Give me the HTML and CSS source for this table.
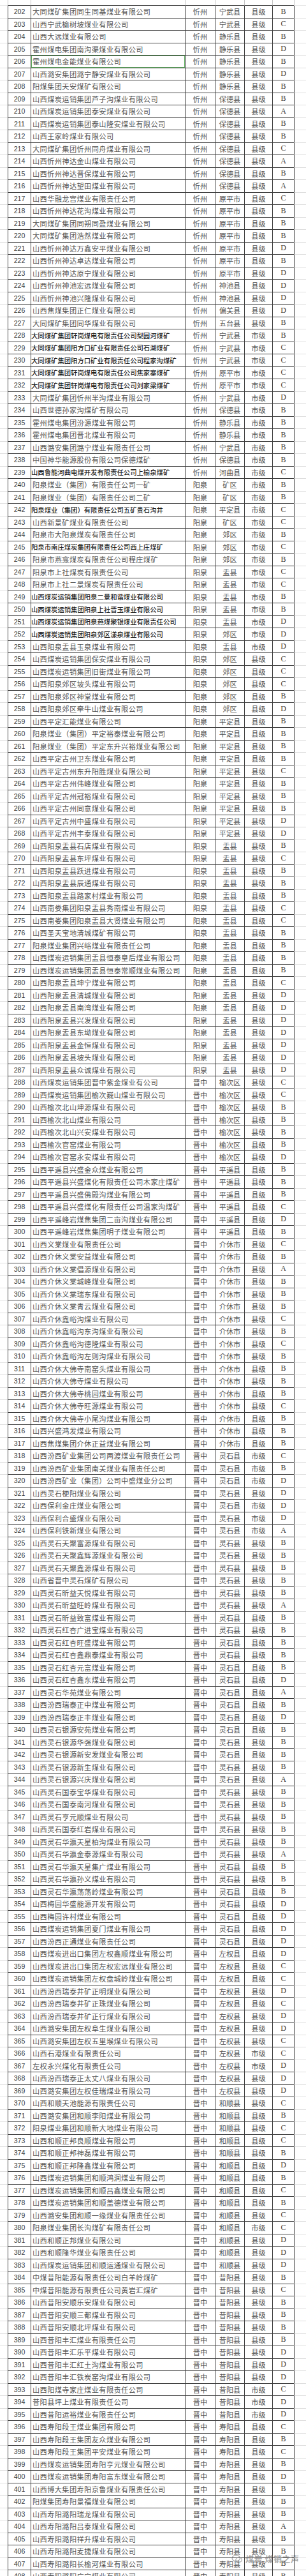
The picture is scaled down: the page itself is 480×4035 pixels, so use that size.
FILE: index.html
```html
<!DOCTYPE html>
<html lang="zh-CN">
<head>
<meta charset="utf-8">
<title>煤矿安全生产标准化等级</title>
<link rel="stylesheet" href="styles.css">
</head>
<body>
<div class="sheet">
  <div class="row top">
    <span class="m"></span><span class="c"></span><span class="c"></span><span class="c"></span><span class="c"></span><span class="c"></span><span class="c"></span><span class="e"></span>
  </div>
  <div id="rows"></div>
  <div class="mark">
    <svg class="mark-ico" viewBox="0 0 20 16" width="18" height="14"><ellipse cx="8" cy="7" rx="7" ry="5.5" fill="none" stroke="currentColor" stroke-width="1.4"/><ellipse cx="13" cy="10" rx="5.5" ry="4.2" fill="none" stroke="currentColor" stroke-width="1.4"/></svg>
    <span class="mark-txt">煤炭 煤销之声</span>
  </div>
</div>
<script src="app.js"></script>
</body>
</html>
```

FILE: styles.css
```css
html, body {
  margin: 0;
  padding: 0;
  background: #fff;
}
.sheet {
  position: relative;
  width: 480px;
  height: 4035px;
  overflow: hidden;
  background: #fff;
}
.row {
  display: grid;
  grid-template-columns: 12px 36px 242px 47px 46px 44px 34px 1fr;
  height: 19.514px;
}
.row > span {
  box-sizing: border-box;
  display: flex;
  align-items: center;
  justify-content: center;
  overflow: hidden;
  white-space: nowrap;
  border-bottom: 1px solid #3d3d3d;
  border-left: 1px solid #3d3d3d;
  font-family: "Noto Sans CJK SC", "Noto Sans", sans-serif;
  font-size: 11.2px;
  color: #555;
}
.row > .m {
  border-left: none;
  border-bottom: 1px solid #dedede;
}
.row > .e {
  border-bottom: 1px solid #dedede;
}
.row.top {
  height: 9px;
}
.row.top > .c {
  border-left-color: #c4c4c4;
}
.row.top > .m {
  border-bottom-color: #e6e6e6;
}
.row.top > .e {
  border-left-color: #c4c4c4;
  border-bottom-color: #e6e6e6;
}
.row > .num {
  font-family: "Liberation Sans", Arial, sans-serif;
  font-size: 10.6px;
  color: #3a3a3a;
}
.row > .name {
  justify-content: flex-start;
  padding-left: 2px;
  letter-spacing: 0.4px;
}
.row > .grade {
  font-family: "Liberation Serif", "Times New Roman", serif;
  font-size: 12px;
  color: #3a3a3a;
}
.row.sans > .name {
  padding-left: 0;
  letter-spacing: 0;
  font-size: 10.35px;
  font-weight: 500;
  color: #1f1f1f;
}
.row > .sel {
  box-shadow: inset 0 0 0 1px #62b062;
}
.mark {
  position: absolute;
  left: 363px;
  top: 3998px;
  display: flex;
  align-items: center;
  gap: 4px;
  color: rgba(110, 110, 110, 0.6);
}
.mark-txt {
  font-family: "Noto Sans CJK SC", sans-serif;
  font-size: 13px;
  font-weight: 700;
  letter-spacing: 0.5px;
}
```

FILE: app.js
```js
var DATA = `大同煤矿集团同生同基煤业有限公司|忻州|宁武县|x|B
山西宁武榆树坡煤业有限公司|忻州|宁武县|x|C
山西大远煤业有限公司|忻州|静乐县|x|B
霍州煤电集团南沟渠煤业有限公司|忻州|静乐县|x|D
霍州煤电金能煤业有限公司|忻州|静乐县|x|B|g
山西潞安集团潞宁静安煤业有限公司|忻州|静乐县|x|D
阳煤集团天安煤矿有限公司|忻州|静乐县|x|B
山西煤炭运销集团芦子沟煤业有限公司|忻州|保德县|x|B
山西煤炭运销集团泰安煤业有限公司|忻州|保德县|x|A
山西煤炭运销集团泰山隆安煤业有限公司|忻州|保德县|x|B
山西王家岭煤业有限公司|忻州|保德县|x|B
大同煤矿集团忻州同舟煤业有限公司|忻州|保德县|x|C
山西忻州神达金山煤业有限公司|忻州|保德县|x|A
山西忻州神达晋保煤业有限公司|忻州|保德县|x|B
山西忻州神达望田煤业有限公司|忻州|保德县|x|A
山西华融龙宫煤业有限责任公司|忻州|原平市|x|C
山西忻州神达花沟煤业有限公司|忻州|原平市|x|B
大同煤矿集团同朔同盈煤业有限公司|忻州|原平市|x|B
大同煤矿集团浩然煤业有限公司|忻州|原平市|x|B
山西忻州神达万鑫安平煤业有限公司|忻州|原平市|x|D
山西忻州神达卓达煤业有限公司|忻州|原平市|x|B
山西忻州神达原宁煤业有限公司|忻州|原平市|x|D
山西忻州神池宏远煤业有限公司|忻州|神池县|x|D
山西忻州神池兴隆煤业有限公司|忻州|神池县|x|D
山西焦煤集团正仁煤业有限公司|忻州|偏关县|x|D
大同煤矿集团同华煤业有限公司|忻州|五台县|x|B
大同煤矿集团轩岗煤电有限责任公司梨园河煤矿|忻州|宁武县|s|B|f
大同煤矿集团阳方口矿业有限责任公司石湖煤矿|忻州|宁武县|s|C|f
大同煤矿集团阳方口矿业有限责任公司程家沟煤矿|忻州|宁武县|s|C|f
大同煤矿集团轩岗煤电有限责任公司焦家寨煤矿|忻州|原平市|s|C|f
大同煤矿集团轩岗煤电有限责任公司刘家梁煤矿|忻州|原平市|s|C|f
大同煤矿集团忻州半沟煤业有限公司|忻州|宁武县|s|D
山西世德孙家沟煤矿有限公司|忻州|保德县|s|B
霍州煤电集团汾源煤业有限公司|忻州|静乐县|s|B
霍州煤电集团晋北煤业有限公司|忻州|静乐县|s|B
山西潞安集团潞宁煤业有限责任公司|忻州|宁武县|s|B
中国神华能源股份有限公司保德煤矿|忻州|保德县|s|B
山西鲁能河曲电煤开发有限责任公司上榆泉煤矿|忻州|河曲县|s|C|f
阳泉煤业（集团）有限责任公司一矿|阳泉|矿区|s|B
阳泉煤业（集团）有限责任公司二矿|阳泉|矿区|s|B
阳泉煤业（集团）有限责任公司五矿贵石沟井|阳泉|平定县|s|C|f
山西新景矿煤业有限责任公司|阳泉|矿区|s|C
阳泉市大阳泉煤炭有限责任公司|阳泉|郊区|s|B
阳泉市南庄煤炭集团有限责任公司西上庄煤矿|阳泉|郊区|s|C|f
阳泉市燕龛煤炭有限责任公司程庄煤矿|阳泉|郊区|s|B
阳泉市上社煤炭有限责任公司|阳泉|盂县|s|C
阳泉市上社二景煤炭有限责任公司|阳泉|盂县|s|C
山西煤炭运销集团阳泉二景和谐煤业有限公司|阳泉|盂县|s|B|f
山西煤炭运销集团阳泉上社晋玉煤业有限公司|阳泉|盂县|s|B|f
山西煤炭运销集团阳泉燕煤聚银煤业有限责任公司|阳泉|盂县|s|D|f
山西煤炭运销集团阳泉郊区漾泉煤业有限公司|阳泉|郊区|s|D|f
山西阳泉盂县玉泉煤业有限公司|阳泉|盂县|s|D
山西煤炭运销集团保安煤业有限公司|阳泉|郊区|x|C
山西煤炭运销集团旧街煤业有限公司|阳泉|郊区|x|C
山西阳泉郊区坡头煤业有限公司|阳泉|郊区|x|C
山西阳泉郊区神堂煤业有限公司|阳泉|郊区|x|B
山西阳泉郊区牵牛山煤业有限公司|阳泉|郊区|x|D
山西平定汇能煤业有限公司|阳泉|平定县|x|B
阳泉煤业（集团）平定裕泰煤业有限公司|阳泉|平定县|x|B
阳泉煤业（集团）平定东升兴裕煤业有限公司|阳泉|平定县|x|B
山西平定古州卫东煤业有限公司|阳泉|平定县|x|B
山西平定古州东升阳胜煤业有限公司|阳泉|平定县|x|C
山西平定古州伟峰煤业有限公司|阳泉|平定县|x|B
山西平定古州冠裕煤业有限公司|阳泉|平定县|x|B
山西平定古州同意煤业有限公司|阳泉|平定县|x|B
山西平定古州中盛煤业有限公司|阳泉|平定县|x|D
山西平定古州丰泰煤业有限公司|阳泉|平定县|x|D
山西阳泉盂县石店煤业有限公司|阳泉|盂县|x|B
山西阳泉盂县东坪煤业有限公司|阳泉|盂县|x|C
山西阳泉盂县跃进煤业有限公司|阳泉|盂县|x|B
山西阳泉盂县辰通煤业有限公司|阳泉|盂县|x|B
山西阳泉盂县路家村煤业有限公司|阳泉|盂县|x|B
山西南娄集团阳泉盂县秀南煤业有限公司|阳泉|盂县|x|C
山西南娄集团阳泉盂县大贤煤业有限公司|阳泉|盂县|x|C
山西圣天宝地清城煤矿有限公司|阳泉|盂县|x|B
阳泉煤业集团兴峪煤业有限责任公司|阳泉|盂县|x|B
山西煤炭运销集团盂县恒泰皇后煤业有限公司|阳泉|盂县|x|B
山西煤炭运销集团盂县恒泰常顺煤业有限公司|阳泉|盂县|x|B
山西阳泉盂县坤宁煤业有限公司|阳泉|盂县|x|C
山西阳泉盂县清城煤业有限公司|阳泉|盂县|x|D
山西阳泉盂县南湾煤业有限公司|阳泉|盂县|x|D
山西阳泉盂县兴发煤业有限公司|阳泉|盂县|x|D
山西阳泉盂县东坳煤业有限公司|阳泉|盂县|x|D
山西阳泉盂县金恒煤业有限公司|阳泉|盂县|x|D
山西阳泉盂县坡头煤业有限公司|阳泉|盂县|x|D
山西阳泉盂县众诚煤业有限公司|阳泉|盂县|x|D
山西煤炭运销集团晋中紫金煤业有公司|晋中|榆次区|x|C
山西煤炭运销集团榆次巍山煤业有限公司|晋中|榆次区|x|C
山西榆次北山坤源煤业有限公司|晋中|榆次区|x|B
山西榆次北山煤业有限公司|晋中|榆次区|x|B
山西榆次北山兴安煤业有限公司|晋中|榆次区|x|B
山西榆次官窑煤业有限公司|晋中|榆次区|x|B
山西榆次官窑永安煤业有限公司|晋中|榆次区|x|D
山西平遥县兴盛金众煤业有限公司|晋中|平遥县|x|B
山西平遥县兴盛煤化有限责任公司木家庄煤矿|晋中|平遥县|x|B
山西平遥县兴盛佛殿沟煤业有限公司|晋中|平遥县|x|B
山西平遥县兴盛煤化有限责任公司温家沟煤矿|晋中|平遥县|x|C
山西平遥峰岩煤焦集团二亩沟煤业有限公司|晋中|平遥县|x|D
山西平遥峰岩煤焦集团明子煤业有限公司|晋中|平遥县|x|B
山西义棠煤业有限责任公司|晋中|介休市|x|C
山西介休义棠安益煤业有限公司|晋中|介休市|x|B
山西介休义棠倡源煤业有限公司|晋中|介休市|x|A
山西介休义棠城峰煤业有限公司|晋中|介休市|x|B
山西介休义棠瑞东煤业有限公司|晋中|介休市|x|B
山西介休义棠青云煤业有限公司|晋中|介休市|x|B
山西介休鑫峪沟煤业有限公司|晋中|介休市|x|C
山西介休鑫峪沟东沟煤业有限公司|晋中|介休市|x|B
山西介休鑫峪沟德隆煤业有限公司|晋中|介休市|x|C
山西介休鑫峪沟左则沟煤业有限公司|晋中|介休市|x|B
山西介休大佛寺南窑头煤业有限公司|晋中|介休市|x|B
山西介休大佛寺煤业有限公司|晋中|介休市|x|B
山西介休大佛寺桃园煤业有限公司|晋中|介休市|x|B
山西介休大佛寺旺源煤业有限公司|晋中|介休市|x|C
山西介休大佛寺小尾沟煤业有限公司|晋中|介休市|x|B
山西兴盛鸿发煤业有限公司|晋中|介休市|x|B
山西焦煤集团介休正益煤业有限公司|晋中|介休市|x|B
山西汾西矿业集团公司两渡煤业有限责任公司|晋中|灵石县|s|C
山西汾西矿业集团南关煤业有限责任公司|晋中|灵石县|s|B
山西汾西矿业（集团）公司中盛煤业分公司|晋中|灵石县|s|D
山西灵石梗阳煤业有限公司|晋中|灵石县|x|D
山西保利金庄煤业有限公司|晋中|灵石县|s|D
山西保利合盛煤业有限公司|晋中|灵石县|s|D
山西保利铁新煤业有限公司|晋中|灵石县|s|A
山西灵石天聚富源煤业有限公司|晋中|灵石县|x|B
山西灵石天聚鑫辉源煤业有限公司|晋中|灵石县|x|B
山西灵石天聚鑫源煤业有限公司|晋中|灵石县|x|B
山西省晋中灵石煤矿有限公司|晋中|灵石县|x|B
山西灵石昕益天悦煤业有限公司|晋中|灵石县|x|B
山西灵石昕益旺岭煤业有限公司|晋中|灵石县|x|A
山西灵石昕益致富煤业有限公司|晋中|灵石县|x|B
山西灵石红杏广进宝煤业有限公司|晋中|灵石县|x|B
山西灵石红杏旺盛煤业有限公司|晋中|灵石县|x|B
山西灵石红杏鑫鼎泰煤业有限公司|晋中|灵石县|x|B
山西灵石红杏元富煤业有限公司|晋中|灵石县|x|B
山西灵石红杏鑫东煤业有限公司|晋中|灵石县|x|D
山西灵石华苑煤业有限公司|晋中|灵石县|x|A
山西汾西瑞泰正中煤业有限公司|晋中|灵石县|x|B
山西汾西瑞泰正丰煤业有限公司|晋中|灵石县|x|D
山西灵石银源安苑煤业有限公司|晋中|灵石县|x|B
山西灵石银源华强煤业有限公司|晋中|灵石县|x|B
山西灵石银源新安发煤业有限公司|晋中|灵石县|x|B
山西灵石银源新生煤业有限公司|晋中|灵石县|x|B
山西灵石银源兴庆煤业有限公司|晋中|灵石县|x|A
山西灵石国泰宝华煤业有限公司|晋中|灵石县|x|B
山西灵石国泰南河煤业有限公司|晋中|灵石县|x|B
山西灵石亨元顺煤业有限公司|晋中|灵石县|x|B
山西灵石国泰红岩煤业有限公司|晋中|灵石县|x|B
山西灵石华瀛天星柏沟煤业有限公司|晋中|灵石县|x|B
山西灵石华瀛金泰源煤业有限公司|晋中|灵石县|x|A
山西灵石华瀛天星集广煤业有限公司|晋中|灵石县|x|B
山西灵石华瀛孙义煤业有限公司|晋中|灵石县|x|B
山西灵石华瀛荡荡岭煤业有限公司|晋中|灵石县|x|B
山西梅园华盛能源开发有限公司|晋中|灵石县|x|D
山西梅园许村煤业有限公司|晋中|灵石县|x|D
山西煤炭运销集团夏门煤业有限公司|晋中|灵石县|x|D
山西汾西正通煤业有限责任公司|晋中|灵石县|x|D
山西煤炭进出口集团左权鑫顺煤业有限公司|晋中|左权县|x|D
山西煤炭进出口集团左权宏远煤业有限公司|晋中|左权县|x|C
山西煤炭运销集团左权盘城岭煤业有限公司|晋中|左权县|x|C
山西汾西瑞泰井矿正明煤业有限公司|晋中|左权县|x|D
山西汾西瑞泰井矿正珠煤业有限公司|晋中|左权县|x|C
山西汾西瑞泰井矿正行煤业有限公司|晋中|左权县|x|D
山西潞安集团左权阜生煤业有限公司|晋中|左权县|x|D
山西潞安集团左权五里堠煤业有限公司|晋中|左权县|x|C
山西石港煤业有限责任公司|晋中|左权县|s|C
左权永兴煤化有限责任公司|晋中|左权县|s|D
山西汾西瑞泰正太丈八煤业有限公司|晋中|左权县|x|D
山西潞安集团左权佳瑞煤业有限公司|晋中|左权县|x|D
山西和顺天池能源有限责任公司|晋中|和顺县|x|C
山西潞安集团和顺李阳煤业有限公司|晋中|和顺县|x|B
阳泉煤业集团和顺新大地煤业有限公司|晋中|和顺县|x|C
山西和顺正邦良顺煤业有限公司|晋中|和顺县|x|C
山西和顺正邦神磊煤业有限公司|晋中|和顺县|x|B
山西和顺正邦隆鑫煤业有限公司|晋中|和顺县|x|D
山西煤炭运销集团和顺鸿润煤业有限公司|晋中|和顺县|x|B
山西煤炭运销集团和顺吕鑫煤业有限公司|晋中|和顺县|x|C
山西煤炭运销集团和顺盖德煤业有限公司|晋中|和顺县|x|B
山西潞安集团和顺一缘煤业有限责任公司|晋中|和顺县|x|C
阳泉煤业集团长沟煤矿有限责任公司|晋中|和顺县|s|C
山西和顺正邦煤业有限公司|晋中|和顺县|x|D
山西和顺隆华煤业有限责任公司|晋中|和顺县|x|D
山西煤炭运销集团和顺运通煤业有限公司|晋中|和顺县|x|D
中煤昔阳能源有限责任公司白羊岭煤矿|晋中|昔阳县|x|B
中煤昔阳能源有限责任公司黄岩汇煤矿|晋中|昔阳县|x|C
山西昔阳安顺乐安煤业有限公司|晋中|昔阳县|x|B
山西昔阳安顺三都煤业有限公司|晋中|昔阳县|x|B
山西昔阳安顺北坪煤业有限公司|晋中|昔阳县|x|B
山西昔阳丰汇煤业有限责任公司|晋中|昔阳县|x|B
山西昔阳丰汇乐平煤业有限公司|晋中|昔阳县|x|D
山西昔阳丰汇红土沟煤业有限公司|晋中|昔阳县|x|D
山西昔阳丰汇铁炭窑沟煤业有限公司|晋中|昔阳县|x|D
山西阳煤寺家庄煤业有限责任公司|晋中|昔阳县|s|C
昔阳县坪上煤业有限责任公司|晋中|昔阳县|s|D
山西昔阳运裕煤业有限责任公司|晋中|昔阳县|s|D
山西寿阳段王煤业集团有限公司|晋中|寿阳县|x|C
山西寿阳段王集团友众煤业有限公司|晋中|寿阳县|x|B
山西寿阳段王集团平安煤业有限公司|晋中|寿阳县|x|C
山西煤炭运销集团寿阳亨元煤业有限公司|晋中|寿阳县|x|B
山西煤炭运销集团寿阳富东煤业有限公司|晋中|寿阳县|x|D
山西博大集团寿阳京鲁煤业有限责任公司|晋中|寿阳县|x|B
阳煤集团寿阳景福煤业有限公司|晋中|寿阳县|x|B
山西寿阳潞阳瑞龙煤业有限公司|晋中|寿阳县|x|B
山西寿阳潞阳吕泰煤业有限公司|晋中|寿阳县|x|A
山西寿阳潞阳祥升煤业有限公司|晋中|寿阳县|x|B
山西寿阳潞阳麦捷煤业有限公司|晋中|寿阳县|x|B
山西寿阳潞阳长榆河煤业有限公司|晋中|寿阳县|x|B
山西寿阳潞阳广宁煤业有限公司|晋中|寿阳县|x|B`;

(function () {
  var host = document.getElementById('rows');
  var lines = DATA.trim().split('\n');
  var frag = document.createDocumentFragment();
  function cell(cls, text) {
    var s = document.createElement('span');
    s.className = cls;
    if (text) s.textContent = text;
    return s;
  }
  lines.forEach(function (line, i) {
    var p = line.split('|');
    var row = document.createElement('div');
    row.className = 'row' + (p[5] === 'f' ? ' sans' : '');
    row.appendChild(cell('m'));
    row.appendChild(cell('num', String(202 + i)));
    row.appendChild(cell('name' + (p[5] === 'g' ? ' sel' : ''), p[0]));
    row.appendChild(cell('city', p[1]));
    row.appendChild(cell('county', p[2]));
    row.appendChild(cell('level', p[3] === 's' ? '市级' : '县级'));
    row.appendChild(cell('grade', p[4]));
    row.appendChild(cell('e'));
    frag.appendChild(row);
  });
  host.appendChild(frag);
})();
```
